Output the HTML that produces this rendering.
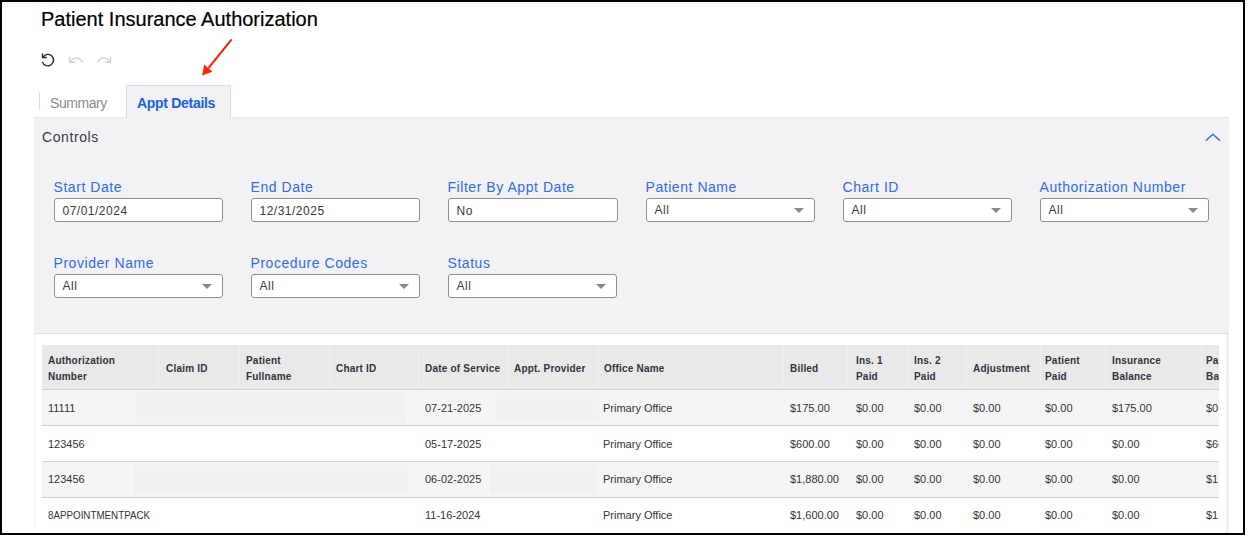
<!DOCTYPE html>
<html><head><meta charset="utf-8">
<style>
html,body{margin:0;padding:0;}
body{width:1247px;height:535px;overflow:hidden;position:relative;background:#fff;font-family:"Liberation Sans",sans-serif;}
.a{position:absolute;white-space:nowrap;line-height:1;}
#frame{position:absolute;left:0;top:0;width:1245px;height:535px;box-sizing:border-box;border:2px solid #000;}
.title{left:41px;top:9px;font-size:20px;color:#000;-webkit-text-stroke:0.2px #000;}
.tb{position:absolute;top:117px;left:34px;width:1195px;height:215px;background:#f2f2f5;border-top:1px solid #e4e4e6;border-bottom:1px solid #d3dff5;}
.tabsel{position:absolute;left:126px;top:85px;width:103px;height:32px;background:#f2f2f5;border:1px solid #d3def5;border-bottom:none;}
.sum{left:50px;top:96px;font-size:14px;color:#8b8b90;letter-spacing:-0.45px;}
.appt{left:137px;top:96px;font-size:14px;font-weight:bold;color:#1b5fe6;letter-spacing:-0.3px;}
.sep{position:absolute;left:39px;top:93px;width:1px;height:16px;background:#cfdcf5;}
.ctrl{left:42px;top:130px;font-size:14px;color:#3a3a48;letter-spacing:0.6px;}
.lbl{font-size:14px;color:#2f6ce5;letter-spacing:0.55px;}
.inp{position:absolute;width:167px;height:22px;background:#fff;border:1px solid #8e8e92;border-radius:3px;}
.val{font-size:12px;color:#38383f;letter-spacing:0.5px;}
.tri{position:absolute;width:0;height:0;border-left:5px solid transparent;border-right:5px solid transparent;border-top:5px solid #8a8a8e;}

.th{position:absolute;top:345px;left:42px;width:1177px;height:44px;background:#e9e9e9;border-bottom:1px solid #cdcdcd;}
.hd{font-size:10px;font-weight:bold;color:#33333f;line-height:16px;letter-spacing:0.2px;}
.rw{position:absolute;left:42px;width:1177px;height:35px;border-bottom:1px solid #d2d2d2;}
.g{background:#f5f5f5;}
.cd{position:absolute;width:1px;background:#f3f3f3;}
.rd{position:absolute;background:#f1f1f1;}
.td{font-size:11px;color:#333338;}
.clip{position:absolute;left:0;top:0;width:1219px;height:535px;overflow:hidden;}
.bgw{position:absolute;left:34px;top:334px;width:1195px;height:199px;background:#fff;}
.scr{position:absolute;left:1226px;top:334px;width:3px;height:199px;background:#f1f1f3;}
</style></head><body>
<div style="position:absolute;left:2px;top:2px;width:1239px;height:5px;background:#fafafa"></div>
<div class="a title">Patient Insurance Authorization</div>

<div class="tb"></div>
<div class="tabsel"></div>
<div class="sep"></div>
<div class="a sum">Summary</div>
<div class="a appt">Appt Details</div>
<div class="a ctrl">Controls</div>

<div class="a lbl" style="left:53.5px;top:180px">Start Date</div>
<div class="inp" style="left:54px;top:198px"></div>
<div class="a val" style="left:62.5px;top:205px">07/01/2024</div>
<div class="a lbl" style="left:250.5px;top:180px">End Date</div>
<div class="inp" style="left:251px;top:198px"></div>
<div class="a val" style="left:259.5px;top:205px">12/31/2025</div>
<div class="a lbl" style="left:447.5px;top:180px">Filter By Appt Date</div>
<div class="inp" style="left:448px;top:198px;width:168px"></div>
<div class="a val" style="left:456.5px;top:205px">No</div>
<div class="a lbl" style="left:645.5px;top:180px">Patient Name</div>
<div class="inp" style="left:646px;top:198px"></div>
<div class="a val" style="left:654.5px;top:204px">All</div>
<div class="tri" style="left:794px;top:208px"></div>
<div class="a lbl" style="left:842.5px;top:180px">Chart ID</div>
<div class="inp" style="left:843px;top:198px"></div>
<div class="a val" style="left:851.5px;top:204px">All</div>
<div class="tri" style="left:991px;top:208px"></div>
<div class="a lbl" style="left:1039.5px;top:180px">Authorization Number</div>
<div class="inp" style="left:1040px;top:198px"></div>
<div class="a val" style="left:1048.5px;top:204px">All</div>
<div class="tri" style="left:1188px;top:208px"></div>
<div class="a lbl" style="left:53.5px;top:256px">Provider Name</div>
<div class="inp" style="left:54px;top:274px"></div>
<div class="a val" style="left:62.5px;top:280px">All</div>
<div class="tri" style="left:202px;top:284px"></div>
<div class="a lbl" style="left:250.5px;top:256px">Procedure Codes</div>
<div class="inp" style="left:251px;top:274px"></div>
<div class="a val" style="left:259.5px;top:280px">All</div>
<div class="tri" style="left:399px;top:284px"></div>
<div class="a lbl" style="left:447.5px;top:256px">Status</div>
<div class="inp" style="left:448px;top:274px"></div>
<div class="a val" style="left:456.5px;top:280px">All</div>
<div class="tri" style="left:596px;top:284px"></div>

<div class="bgw"></div><div style="position:absolute;left:34px;top:334px;width:1px;height:199px;background:#f2f2f2"></div><div class="scr"></div>
<div class="clip">
<div class="th"></div>
<div class="cd" style="left:158px;top:346px;height:43px;background:#f0f0f0"></div>
<div class="cd" style="left:239px;top:346px;height:43px;background:#f0f0f0"></div>
<div class="cd" style="left:329px;top:346px;height:43px;background:#f0f0f0"></div>
<div class="cd" style="left:418px;top:346px;height:43px;background:#f0f0f0"></div>
<div class="cd" style="left:507px;top:346px;height:43px;background:#f0f0f0"></div>
<div class="cd" style="left:598px;top:346px;height:43px;background:#f0f0f0"></div>
<div class="cd" style="left:783px;top:346px;height:43px;background:#f0f0f0"></div>
<div class="cd" style="left:847px;top:346px;height:43px;background:#f0f0f0"></div>
<div class="cd" style="left:907px;top:346px;height:43px;background:#f0f0f0"></div>
<div class="cd" style="left:966px;top:346px;height:43px;background:#f0f0f0"></div>
<div class="cd" style="left:1040px;top:346px;height:43px;background:#f0f0f0"></div>
<div class="cd" style="left:1105px;top:346px;height:43px;background:#f0f0f0"></div>
<div class="cd" style="left:1201px;top:346px;height:43px;background:#f0f0f0"></div>
<div class="a hd" style="left:48px;top:353px">Authorization<br>Number</div>
<div class="a hd" style="left:166px;top:361px">Claim ID</div>
<div class="a hd" style="left:246px;top:353px">Patient<br>Fullname</div>
<div class="a hd" style="left:336px;top:361px">Chart ID</div>
<div class="a hd" style="left:425px;top:361px">Date of Service</div>
<div class="a hd" style="left:514px;top:361px">Appt. Provider</div>
<div class="a hd" style="left:604px;top:361px">Office Name</div>
<div class="a hd" style="left:790px;top:361px">Billed</div>
<div class="a hd" style="left:856px;top:353px">Ins. 1<br>Paid</div>
<div class="a hd" style="left:914px;top:353px">Ins. 2<br>Paid</div>
<div class="a hd" style="left:973px;top:361px">Adjustment</div>
<div class="a hd" style="left:1045px;top:353px">Patient<br>Paid</div>
<div class="a hd" style="left:1112px;top:353px">Insurance<br>Balance</div>
<div class="a hd" style="left:1206px;top:353px">Patient<br>Balance</div>
<div class="rw g" style="top:390px"></div>
<div class="cd" style="left:158px;top:390px;height:35px"></div>
<div class="cd" style="left:239px;top:390px;height:35px"></div>
<div class="cd" style="left:329px;top:390px;height:35px"></div>
<div class="cd" style="left:418px;top:390px;height:35px"></div>
<div class="cd" style="left:507px;top:390px;height:35px"></div>
<div class="cd" style="left:598px;top:390px;height:35px"></div>
<div class="cd" style="left:783px;top:390px;height:35px"></div>
<div class="cd" style="left:847px;top:390px;height:35px"></div>
<div class="cd" style="left:907px;top:390px;height:35px"></div>
<div class="cd" style="left:966px;top:390px;height:35px"></div>
<div class="cd" style="left:1040px;top:390px;height:35px"></div>
<div class="cd" style="left:1105px;top:390px;height:35px"></div>
<div class="cd" style="left:1201px;top:390px;height:35px"></div>
<div class="a td" style="left:48px;top:403px">11111</div>
<div class="a td" style="left:425px;top:403px">07-21-2025</div>
<div class="a td" style="left:603px;top:403px">Primary Office</div>
<div class="a td" style="left:790px;top:403px">$175.00</div>
<div class="a td" style="left:856px;top:403px">$0.00</div>
<div class="a td" style="left:914px;top:403px">$0.00</div>
<div class="a td" style="left:973px;top:403px">$0.00</div>
<div class="a td" style="left:1045px;top:403px">$0.00</div>
<div class="a td" style="left:1112px;top:403px">$175.00</div>
<div class="a td" style="left:1206px;top:403px">$0.00</div>
<div class="rw" style="top:426px"></div>
<div class="a td" style="left:48px;top:439px">123456</div>
<div class="a td" style="left:425px;top:439px">05-17-2025</div>
<div class="a td" style="left:603px;top:439px">Primary Office</div>
<div class="a td" style="left:790px;top:439px">$600.00</div>
<div class="a td" style="left:856px;top:439px">$0.00</div>
<div class="a td" style="left:914px;top:439px">$0.00</div>
<div class="a td" style="left:973px;top:439px">$0.00</div>
<div class="a td" style="left:1045px;top:439px">$0.00</div>
<div class="a td" style="left:1112px;top:439px">$0.00</div>
<div class="a td" style="left:1206px;top:439px">$600.00</div>
<div class="rw g" style="top:462px"></div>
<div class="cd" style="left:158px;top:462px;height:35px"></div>
<div class="cd" style="left:239px;top:462px;height:35px"></div>
<div class="cd" style="left:329px;top:462px;height:35px"></div>
<div class="cd" style="left:418px;top:462px;height:35px"></div>
<div class="cd" style="left:507px;top:462px;height:35px"></div>
<div class="cd" style="left:598px;top:462px;height:35px"></div>
<div class="cd" style="left:783px;top:462px;height:35px"></div>
<div class="cd" style="left:847px;top:462px;height:35px"></div>
<div class="cd" style="left:907px;top:462px;height:35px"></div>
<div class="cd" style="left:966px;top:462px;height:35px"></div>
<div class="cd" style="left:1040px;top:462px;height:35px"></div>
<div class="cd" style="left:1105px;top:462px;height:35px"></div>
<div class="cd" style="left:1201px;top:462px;height:35px"></div>
<div class="a td" style="left:48px;top:474px">123456</div>
<div class="a td" style="left:425px;top:474px">06-02-2025</div>
<div class="a td" style="left:603px;top:474px">Primary Office</div>
<div class="a td" style="left:790px;top:474px">$1,880.00</div>
<div class="a td" style="left:856px;top:474px">$0.00</div>
<div class="a td" style="left:914px;top:474px">$0.00</div>
<div class="a td" style="left:973px;top:474px">$0.00</div>
<div class="a td" style="left:1045px;top:474px">$0.00</div>
<div class="a td" style="left:1112px;top:474px">$0.00</div>
<div class="a td" style="left:1206px;top:474px">$1,880.00</div>
<div class="rw" style="top:498px;border-bottom:none;height:40px"></div>
<div class="a td" style="left:48px;top:510px;transform:scaleX(0.89);transform-origin:0 0">8APPOINTMENTPACK</div>
<div class="a td" style="left:425px;top:510px">11-16-2024</div>
<div class="a td" style="left:603px;top:510px">Primary Office</div>
<div class="a td" style="left:790px;top:510px">$1,600.00</div>
<div class="a td" style="left:856px;top:510px">$0.00</div>
<div class="a td" style="left:914px;top:510px">$0.00</div>
<div class="a td" style="left:973px;top:510px">$0.00</div>
<div class="a td" style="left:1045px;top:510px">$0.00</div>
<div class="a td" style="left:1112px;top:510px">$0.00</div>
<div class="a td" style="left:1206px;top:510px">$1,600.00</div>
<div class="rd" style="left:136px;top:392px;width:269px;height:31px"></div>
<div class="rd" style="left:495px;top:393px;width:104px;height:27px"></div>
<div class="rd" style="left:134px;top:465px;width:274px;height:29px"></div>
<div class="rd" style="left:490px;top:465px;width:106px;height:29px"></div>
</div>
<svg style="position:absolute;left:0;top:0" width="1247" height="535" viewBox="0 0 1247 535">
<g fill="none" stroke-linecap="round" stroke-linejoin="round">
<path d="M42.5 62.3 A5.75 5.75 0 1 0 45.2 55 L42.6 57.5" stroke="#2a2a38" stroke-width="1.4"/>
<path d="M42.5 53.9 V57.6 H46.2" stroke="#2a2a38" stroke-width="1.5"/>
<path d="M69.6 57.4 V62.3 H74.5" stroke="#cfcfd2" stroke-width="1.4"/>
<path d="M82.5 61.9 Q77 54.2 70.3 61.3" stroke="#cfcfd2" stroke-width="1.3"/>
<path d="M110.5 57.4 V62.3 H105.6" stroke="#cfcfd2" stroke-width="1.4"/>
<path d="M97.6 61.9 Q103.1 54.2 109.8 61.3" stroke="#cfcfd2" stroke-width="1.3"/>
<path d="M1206.3 140.3 L1212.9 134.2 L1219.5 140.3" stroke="#2c6cf0" stroke-width="1.5"/>
<path d="M231.6 39.4 L208.5 68" stroke="#ff2200" stroke-width="2" stroke-linecap="butt"/>
</g>
<path d="M202.1 75.6 L204.2 64.6 L212.4 71.8 Z" fill="#ff2200"/>
</svg>
<div id="frame"></div>
</body></html>
